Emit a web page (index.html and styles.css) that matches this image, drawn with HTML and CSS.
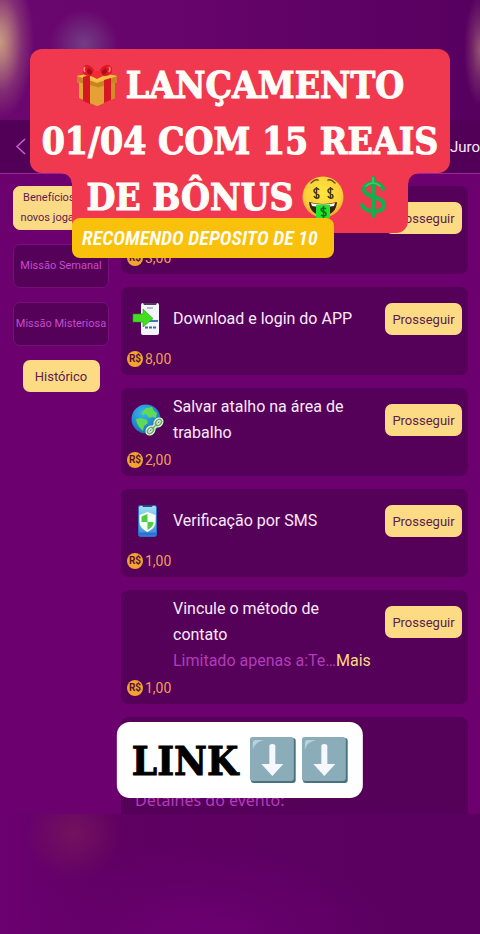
FILE: index.html
```html
<!DOCTYPE html>
<html lang="pt-BR">
<head>
<meta charset="utf-8">
<meta name="viewport" content="width=device-width, initial-scale=1">
<title>Missões</title>
<link rel="stylesheet" href="styles.css">
</head>
<body>
<div class="stage">
  <div class="glow-top"></div>

  <header class="topbar">
    <button class="back" type="button" aria-label="Voltar">
      <svg width="12" height="18" viewBox="0 0 12 18"><path d="M11 1 3 8.500l8 7.500" fill="none" stroke="#cf5bd6" stroke-width="1.500"/></svg>
    </button>
    <a class="topbar-link" href="#">Juro</a>
  </header>

  <main class="content">
    <nav class="side">
      <button class="tab tab-active" type="button">Benefícios para novos jogadores</button>
      <button class="tab" type="button">Missão Semanal</button>
      <button class="tab" type="button">Missão Misteriosa</button>
      <button class="gold" type="button">Histórico</button>
    </nav>

    <section class="tasks">
      <article class="card">
        <div class="row">
          <div class="icon"></div>
          <div class="text"></div>
          <div class="action"><button class="gold" type="button">Prosseguir</button></div>
        </div>
        <p class="price"><span class="coin">R$</span>3,00</p>
      </article>

      <article class="card">
        <div class="row">
          <div class="icon">
            <svg width="34" height="34" viewBox="0 0 34 34">
              <rect x="11" y="1" width="18" height="32" rx="2" fill="#f4f5fc"/>
              <path d="M13 1h14l-1 2H14z" fill="#4a4058"/>
              <path d="M17 6h6" stroke="#b9b9c4" stroke-width="2"/>
              <path d="M18 19h10" stroke="#3c78b8" stroke-width="2"/>
              <path d="M15 25.500h11" stroke="#42669c" stroke-width="2" stroke-dasharray="3 1"/>
              <path d="M3 12h10V7l10 9.500L13 25v-5H3z" fill="#43df1c" stroke="#239b22" stroke-width=".6"/>
            </svg>
          </div>
          <div class="text"><h2>Download e login do APP</h2></div>
          <div class="action"><button class="gold" type="button">Prosseguir</button></div>
        </div>
        <p class="price"><span class="coin">R$</span>8,00</p>
      </article>

      <article class="card">
        <div class="row">
          <div class="icon">
            <svg width="34" height="34" viewBox="0 0 34 34">
              <defs><radialGradient id="sea" cx=".4" cy=".3" r=".8"><stop offset="0" stop-color="#39b8ee"/><stop offset="1" stop-color="#1565b4"/></radialGradient></defs>
              <circle cx="16" cy="16" r="14.500" fill="url(#sea)"/>
              <path d="M12 9l4-4 6-1 2 4 3 2-1 5-4-1-3 1-3-4-4 1zM6 16l5-1 6 2 1 3-4 3-1 5-4-4-2-4z" fill="#5fda55"/>
              <g fill="none" stroke="#e2f5d4" stroke-width="4"><ellipse cx="20.500" cy="27.500" rx="3.500" ry="2.500" transform="rotate(-45 20.500 27.500)"/><ellipse cx="28.500" cy="19.500" rx="3.500" ry="2.500" transform="rotate(-45 28.500 19.500)"/><path d="M22 26l5-5"/></g>
              <g fill="none" stroke="#76a965" stroke-width="1.500"><ellipse cx="20.500" cy="27.500" rx="3.500" ry="2.500" transform="rotate(-45 20.500 27.500)"/><ellipse cx="28.500" cy="19.500" rx="3.500" ry="2.500" transform="rotate(-45 28.500 19.500)"/><path d="M22 26l5-5"/></g>
            </svg>
          </div>
          <div class="text"><h2>Salvar atalho na área de trabalho</h2></div>
          <div class="action"><button class="gold" type="button">Prosseguir</button></div>
        </div>
        <p class="price"><span class="coin">R$</span>2,00</p>
      </article>

      <article class="card">
        <div class="row">
          <div class="icon">
            <svg width="34" height="34" viewBox="0 0 34 34">
              <defs><linearGradient id="phone" x1="0" y1="0" x2="0" y2="1"><stop offset="0" stop-color="#a6e2f6"/><stop offset="1" stop-color="#3487dc"/></linearGradient></defs>
              <rect x="8.500" y="1.500" width="18" height="31" rx="2" fill="url(#phone)" stroke="#2f70c8"/>
              <path d="M12 1h11l-1 2h-9z" fill="#264a86"/>
              <path d="M9 30h17" stroke="#3070d0" stroke-width="3"/>
              <path d="M17.500 8l8 3v7c0 5-4 8-8 10-4-2-8-5-8-10v-7z" fill="#f5fff4"/>
              <path d="M17.500 10v8h-6v-5.500zM17.500 18h6c0 4-3 6-6 8z" fill="#4fce45"/>
            </svg>
          </div>
          <div class="text"><h2>Verificação por SMS</h2></div>
          <div class="action"><button class="gold" type="button">Prosseguir</button></div>
        </div>
        <p class="price"><span class="coin">R$</span>1,00</p>
      </article>

      <article class="card">
        <div class="row">
          <div class="icon"></div>
          <div class="text">
            <h2>Vincule o método de contato</h2>
            <p class="note">Limitado apenas a:Te…<a href="#">Mais</a></p>
          </div>
          <div class="action"><button class="gold" type="button">Prosseguir</button></div>
        </div>
        <p class="price"><span class="coin">R$</span>1,00</p>
      </article>

      <article class="card details"><p>Detalhes do evento:</p></article>
    </section>
  </main>

  <div class="glow-bottom"></div>

  <div class="promo">
    <div class="promo-main">
      <p class="promo-line">
        <svg class="emoji" viewBox="0 0 42 42">
          <path d="M1 12l20-4 20 4v6l-2 1v15l-18 8-18-8V19l-2-1z" fill="#e6a633"/>
          <path d="M21 20v22l18-8V17z" fill="#d38c28"/>
          <path d="M1 12l20 6v5L1 18zM41 12l-20 6v5l20-5z" fill="#c98325"/>
          <path d="M1 12l20-4 20 4-20 7z" fill="#f4bd42"/>
          <path d="M7 13l7-2v29l-7-3zM28 16l7-2v22l-7 3z" fill="#d51824"/>
          <path d="M13 14l8-2 8 2-8 3z" fill="#f6c94e"/>
          <path d="M14 22l7 2 7-2v17l-7 3-7-3z" fill="#e3a233"/>
          <path d="M20 11C14 13 8 12 7 9 6 4 8 0 12 1c4 1 7 5 8 10zM22 11c6 2 13 1 14-3 1-5-2-8-6-7-4 1-7 5-8 10z" fill="#e31725"/>
          <path d="M12 4c3 1 5 4 6 6-4 1-7 0-7-3zM30 4c-3 1-5 4-6 6 4 1 7 0 7-3z" fill="#a80d1c"/>
          <path d="M17 7h8l2 5-6 3-6-3z" fill="#f22c35"/>
          <path d="M9 3q-2 2 0 5M33 3q2 2 0 5" fill="none" stroke="#ff8b85" stroke-width="1.500"/>
        </svg>
        <span>LANÇAMENTO</span>
      </p>
      <p class="promo-line">01/04 COM 15 REAIS</p>
    </div>
    <div class="promo-tail">
      <p class="promo-line">
        <span>DE BÔNUS</span>
        <svg class="emoji" viewBox="0 0 42 42">
          <defs><radialGradient id="face" cx=".5" cy=".4" r=".6"><stop offset="0" stop-color="#fce63f"/><stop offset=".75" stop-color="#fbcf38"/><stop offset="1" stop-color="#eda52c"/></radialGradient></defs>
          <circle cx="21" cy="21" r="20.500" fill="url(#face)"/>
          <path d="M9 7q4-4 7-3M33 7q-4-4-7-3" fill="none" stroke="#705018" stroke-width="1.500" stroke-linecap="round"/>
          <path d="M17 14c-1-2-5-2-5 1s5 2 5 5-4 3-5 0M14.500 11v12M31 14c-1-2-5-2-5 1s5 2 5 5-4 3-5 0M28.500 11v12" fill="none" stroke="#493417" stroke-width="1.500"/>
          <path d="M7 26q14 4 28 0-1 13-14 13T7 26z" fill="#35240f"/>
          <path d="M9 27q12 3 24 0l-1 3q-11 2-22 0z" fill="#fff"/>
          <path d="M14 29h14v13H14z" fill="#20e72c"/>
          <path d="M24 33c-2-2-5-1-5 1s5 1 5 4-4 2-5 1M21.500 30v12" fill="none" stroke="#126a1c" stroke-width="1.500"/>
        </svg>
        <svg class="emoji" viewBox="0 0 42 42">
          <path d="M31 13C29 5 12 5 12 13.500S32 20 32 29 13 37 10 29M21 2v38" fill="none" stroke="#10b14c" stroke-width="4" stroke-linecap="round"/>
          <path d="M14 10q7-6 14 0M21 2v4" fill="none" stroke="#35cf72" stroke-width="1.500" stroke-linecap="round"/>
        </svg>
      </p>
    </div>
    <p class="tip">RECOMENDO DEPOSITO DE 10</p>
  </div>

  <a class="link" href="#">
    <span>LINK</span>
    <svg class="arrow" viewBox="0 0 46 46"><rect x="1" y="1" width="45" height="45" rx="3" fill="#49717f"/><rect width="44" height="44" rx="3" fill="#8bacb9"/><path d="M3 13V6q0-3 3-3h8Q5 5 3 13z" fill="#b7d2dc"/><path d="M19.500 9q0-2 3-2t3 2v18h8L22.500 39 11.500 27h8z" fill="#f5f8ff"/></svg>
    <svg class="arrow" viewBox="0 0 46 46"><rect x="1" y="1" width="45" height="45" rx="3" fill="#49717f"/><rect width="44" height="44" rx="3" fill="#8bacb9"/><path d="M3 13V6q0-3 3-3h8Q5 5 3 13z" fill="#b7d2dc"/><path d="M19.500 9q0-2 3-2t3 2v18h8L22.500 39 11.500 27h8z" fill="#f5f8ff"/></svg>
  </a>
</div>
</body>
</html>
```
FILE: styles.css
```css
* { box-sizing: border-box; }

body {
  margin: 0;
  background: #6b006e;
  color: #fbeafd;
  font-family: Roboto, "Noto Sans", sans-serif;
}

h2, p { margin: 0; }
button { border: 0; font-family: inherit; cursor: pointer; }
a { color: inherit; text-decoration: none; }

.stage {
  position: relative;
  display: flex;
  flex-direction: column;
  min-height: 100vh;
  overflow: hidden;
}

/* Blurred bands above and below the app */
.glow-top {
  height: 120px;
  background:
    radial-gradient(ellipse 34px 76px at 0 42px, #c99b80 0, #c99b80c0 25%, #c99b8040 65%, #c99b8000 100%),
    radial-gradient(ellipse 34px 34px at 84px 44px, #76508cc0 0, #76508c60 50%, #76508c00 100%),
    radial-gradient(ellipse 16px 56px at 100% 50px, #ac7078c0 0, #ac707850 50%, #ac707800 100%),
    linear-gradient(90deg, #6b0870 0, #66046a 40%, #570060 100%);
}

.glow-bottom {
  flex: 1;
  min-height: 121px;
  background:
    radial-gradient(ellipse 50px 46px at 74px 20px, #78185ac0 0, #78185a60 50%, #78185a00 100%),
    radial-gradient(ellipse 190px 90px at 200px 100%, #6b0070 0, #6b007080 50%, #6b007000 100%),
    linear-gradient(90deg, #6b0070 0, #5f0063 24%, #590060 100%);
}

.topbar {
  display: flex;
  align-items: center;
  justify-content: space-between;
  height: 54px;
  padding-left: 14px;
  background: #520057;
  border-bottom: 1px solid #98259e;
}

.back { display: flex; padding: 0; background: none; }
.topbar-link { font-size: 15px; line-height: 20px; }

.content {
  display: flex;
  gap: 12px;
  padding: 12px 12px 0 13px;
}

.side {
  display: flex;
  flex: 0 0 96px;
  flex-direction: column;
  align-items: center;
  gap: 14px;
}

.tab {
  width: 100%;
  height: 44px;
  padding: 0;
  border: 1px solid #76107b;
  border-radius: 7px;
  background: #550059;
  color: #c54ccc;
  font-size: 11px;
  line-height: 20px;
}

.tab-active { border-color: #fbda85; background: #fbda85; color: #5c1c50; }

.gold {
  width: 77px;
  height: 32px;
  padding: 0;
  border-radius: 7px;
  background: #fddb84;
  color: #5c1c50;
  font-size: 13px;
}

.tasks {
  display: flex;
  flex: 1;
  flex-direction: column;
  gap: 13px;
  min-width: 0;
}

.card {
  padding: 6px;
  border-radius: 8px;
  background: #550059;
}

.row { display: flex; min-height: 52px; }
.icon { display: flex; align-items: center; width: 46px; height: 52px; padding-left: 3px; }
.text { display: flex; flex: 1; flex-direction: column; justify-content: center; min-width: 0; }
.action { display: flex; align-items: center; height: 52px; }

.text h2 { max-width: 190px; font-size: 16px; font-weight: 400; line-height: 26px; }
.note { color: #b13cba; font-size: 16px; line-height: 26px; white-space: nowrap; }
.note a { color: #fbda85; }

.price {
  display: flex;
  align-items: center;
  gap: 2px;
  margin-top: 4px;
  color: #ef9f55;
  font-size: 14px;
  line-height: 20px;
}

.coin {
  width: 16px;
  height: 16px;
  border-radius: 50%;
  background: #f5a32f;
  color: #55103a;
  font-size: 10px;
  font-weight: 700;
  line-height: 16px;
  text-align: center;
}

.details {
  height: 97px;
  padding: 70px 14px 0;
  border-radius: 8px 8px 0 0;
  color: #b13cba;
  font-family: "Noto Sans", sans-serif;
  font-size: 16px;
  line-height: 26px;
}

/* Stickers lying over the app */
.promo {
  position: absolute;
  top: 49px;
  left: 30px;
  right: 30px;
  display: flex;
  flex-direction: column;
  align-items: center;
  color: #fffdf8;
}

.promo-line {
  display: flex;
  align-items: center;
  justify-content: center;
  gap: 8px;
  font-family: "DejaVu Serif Condensed", "DejaVu Serif", serif;
  font-size: 37px;
  font-weight: 700;
  line-height: 56px;
  white-space: nowrap;
  -webkit-text-stroke: 1px currentColor;
}

.promo-main {
  width: 100%;
  padding: 8px 0 4px;
  border-radius: 12px;
  background: #f0394f;
}

.promo-tail {
  position: relative;
  width: 80%;
  padding-bottom: 12px;
  border-radius: 0 0 12px 12px;
  background: #f0394f;
}

.promo-tail .promo-line { line-height: 48px; }

.promo-tail::before,
.promo-tail::after {
  content: "";
  position: absolute;
  top: 0;
  width: 10px;
  height: 10px;
}

.promo-tail::before { right: 100%; background: radial-gradient(circle at 0 100%, transparent 9px, #f0394f 10px); }
.promo-tail::after { left: 100%; background: radial-gradient(circle at 100% 100%, transparent 9px, #f0394f 10px); }

.emoji { flex: none; width: 42px; height: 42px; }

.tip {
  position: absolute;
  top: 169px;
  left: 10%;
  padding: 0 16px 0 10px;
  border-radius: 8px;
  background: #f9c10b;
  font-family: "Roboto Condensed", "Liberation Sans Narrow", sans-serif;
  font-size: 20px;
  font-style: italic;
  font-weight: 600;
  line-height: 40px;
  white-space: nowrap;
}

.link {
  position: absolute;
  top: 722px;
  left: 50%;
  display: flex;
  align-items: center;
  gap: 6px;
  height: 76px;
  padding: 0 15px;
  border-radius: 13px;
  background: #fff;
  color: #000;
  font-family: "DejaVu Serif Condensed", "DejaVu Serif", serif;
  font-size: 40px;
  font-weight: 700;
  transform: translateX(-50%);
  -webkit-text-stroke: 1px currentColor;
}

.link span { margin-right: 6px; }
.arrow { width: 46px; height: 46px; }
```
